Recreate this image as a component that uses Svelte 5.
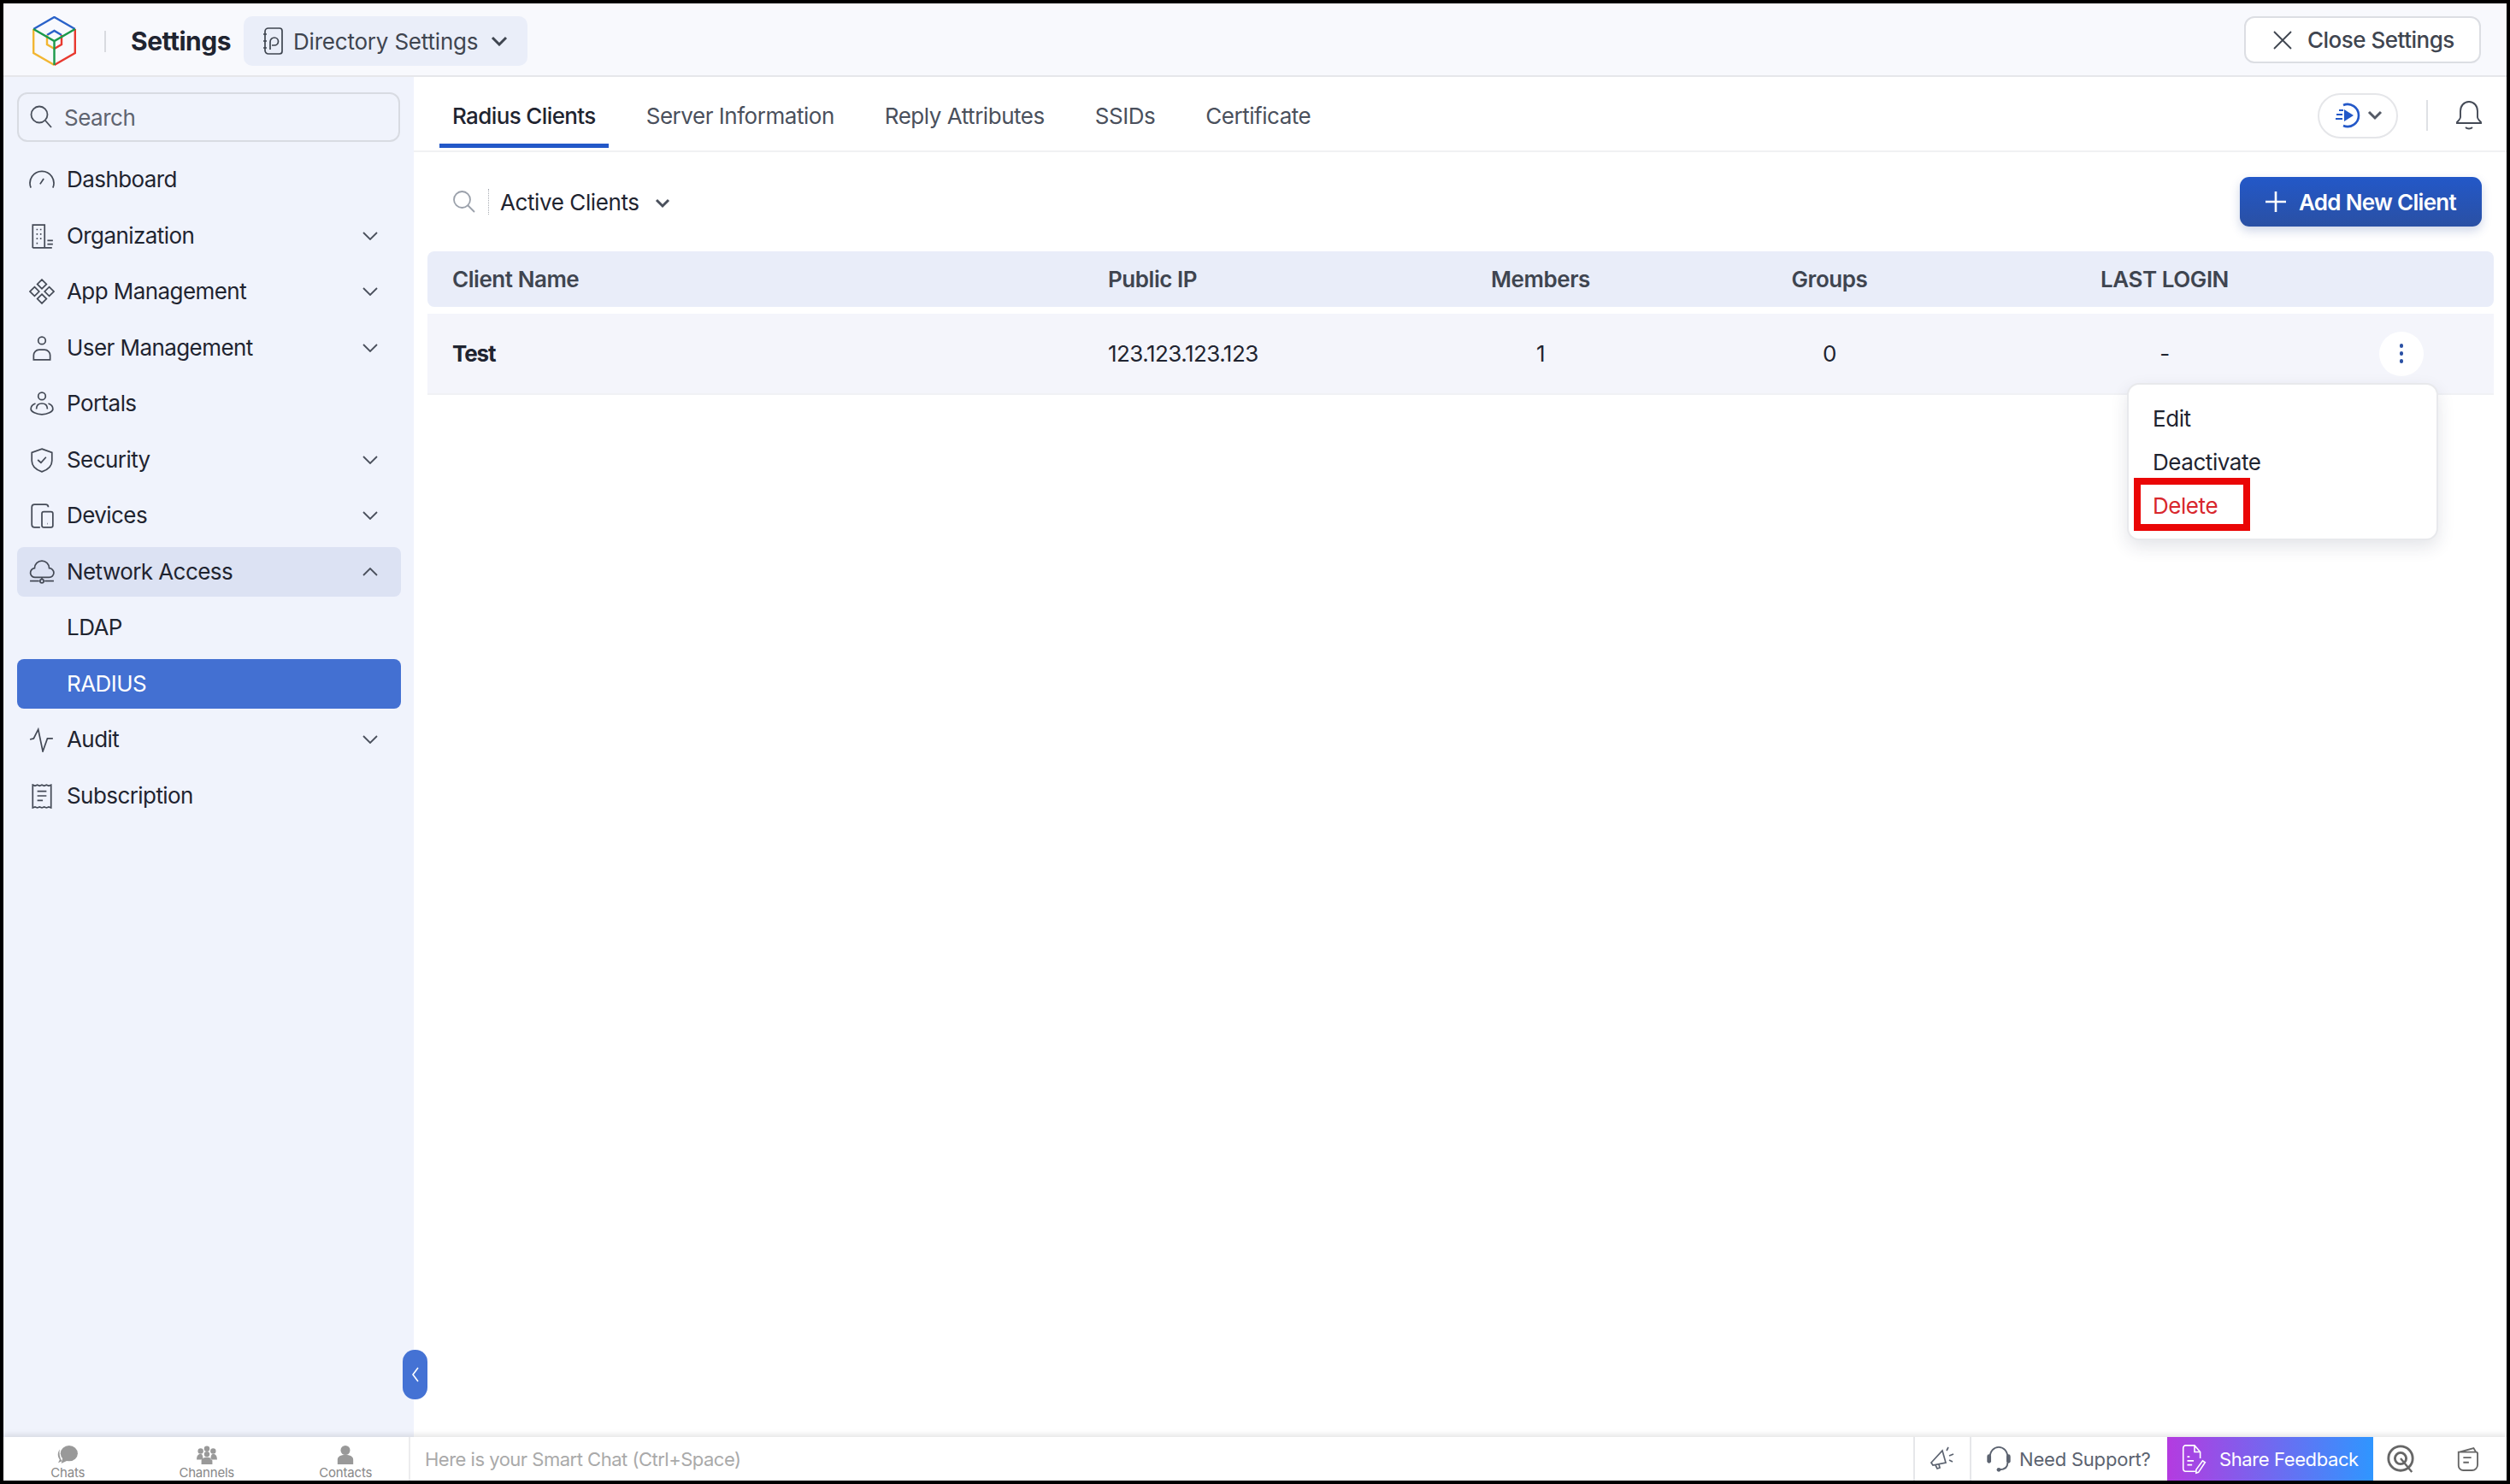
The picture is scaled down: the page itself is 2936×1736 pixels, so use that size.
<script>
  const nav = [
    { label: 'Dashboard', d: 'M2 23A13 13 0 1 1 26 23M12 19l4-6' },
    { label: 'Organization', chev: true, d: 'M4 27V2h13v25H4M17 27h8M20 19h6M20 23h6M8 7h1.5M12 7h1.5M8 12h1.5M12 12h1.5M8 17h1.5M12 17h1.5M8 22h1.5' },
    { label: 'App Management', chev: true, d: 'M14 1l5 5-5 5-5-5zM6 9l5 5-5 5-5-5zM22 9l5 5-5 5-5-5zM14 17l5 5-5 5-5-5z' },
    { label: 'User Management', chev: true, d: 'M18 6a4 4 0 1 1-8 0 4 4 0 0 1 8 0zM5 27v-5a6 6 0 0 1 6-6h6a6 6 0 0 1 6 6v5z' },
    { label: 'Portals', d: 'M18 6a4 4 0 1 1-8 0 4 4 0 0 1 8 0zM8 20c0-4 2-6 6-6s6 2 6 6M7 14c-3 1-5 3-5 6 0 3 6 6 12 6s12-3 12-6c0-3-2-5-5-6' },
    { label: 'Security', chev: true, d: 'M14 2l11 4v9c0 6-5 10-11 12C8 25 3 21 3 15V6zM9.500 14l3.500 3 5.500-6' },
    { label: 'Devices', chev: true, d: 'M21 5a3 3 0 0 0-3-3H6a3 3 0 0 0-3 3v19a3 3 0 0 0 3 3h6M16 10h8a2 2 0 0 1 2 2v13a2 2 0 0 1-2 2h-8a2 2 0 0 1-2-2V12a2 2 0 0 1 2-2zM20 23h.5' },
    { label: 'Network Access', open: true, d: 'M7 20a5 5 0 0 1-1-10 8 8 0 0 1 16 0 5 5 0 0 1 0 10zM1 24h10M17 24h10M14 20v2M16 24a2 2 0 1 1-4 0 2 2 0 0 1 4 0z' },
    { label: 'LDAP', sub: true },
    { label: 'RADIUS', sub: true, active: true },
    { label: 'Audit', chev: true, d: 'M1 14l4-1 5-10 5 24 5-14h6' },
    { label: 'Subscription', d: 'M4 2l2.500 1 2.500-1 2.500 1L14 2l2.500 1L19 2l2.500 1L24 2v25l-2.500-1-2.500 1-2.500-1-2.500 1-2.500-1L9 27l-2.500-1L4 27zM9 9h10M9 14h10M9 19h6' }
  ];
  const tabs = ['Radius Clients', 'Server Information', 'Reply Attributes', 'SSIDs', 'Certificate'];
</script>

<div class="page">
  <header class="topbar">
    <svg class="logo" viewBox="0 0 51 58" width="51" height="58" fill="none" stroke-width="2.4">
      <path d="M1.200 15L25.500 1 49.800 15" stroke="#2a62c9"/>
      <path d="M17 22l8.500-5 8.500 5" stroke="#2a62c9"/>
      <path d="M1.200 15v28l24.300 14" stroke="#f2b632"/>
      <path d="M17 22v11l8.500 5" stroke="#f2b632"/>
      <path d="M49.800 15v28L25.500 57" stroke="#e8392f"/>
      <path d="M34 22v11l-8.500 5" stroke="#e8392f"/>
      <path d="M1.200 15l24.300 14L49.800 15M25.500 29v28" stroke="#1a9a4a"/>
    </svg>
    <span class="vline"></span>
    <span class="title">Settings</span>
    <button class="dir">
      <svg viewBox="0 0 24 34" width="24" height="34" fill="none" stroke="#3f4550" stroke-width="1.700">
        <path d="M3 6a4 4 0 0 1 4-4h13a3 3 0 0 1 3 3v24a3 3 0 0 1-3 3H7a4 4 0 0 1-4-4zM1 9h4M1 17h4M1 25h4M9 27v-9a5 5 0 0 1 5-5 4 4 0 0 1 0 9h-3"/>
      </svg>
      <span>Directory Settings</span>
      <svg viewBox="0 0 20 12" width="20" height="12" fill="none" stroke="#3f4550" stroke-width="3"><path d="M2 2l8 8 8-8"/></svg>
    </button>
    <button class="close">
      <svg viewBox="0 0 22 22" width="22" height="22" fill="none" stroke="#3f4550" stroke-width="1.800"><path d="M1 1l20 20M21 1L1 21"/></svg>
      <span>Close Settings</span>
    </button>
  </header>

  <div class="middle">
    <aside class="sidebar">
      <div class="search">
        <svg viewBox="0 0 26 28" width="26" height="28" fill="none" stroke="#4a505c" stroke-width="1.800"><circle cx="11" cy="11" r="9.500"/><path d="M18 18l7 8"/></svg>
        <span>Search</span>
      </div>
      <nav>
        {#each nav as item}
          <div class="row" class:open={item.open} class:active={item.active}>
            {#if item.d}
              <svg class="ico" viewBox="0 0 28 28" width="30" height="30" fill="none" stroke="#444a56" stroke-width="1.600"><path d={item.d}/></svg>
            {:else}
              <span class="ico-space"></span>
            {/if}
            <span class="lbl">{item.label}</span>
            {#if item.chev}
              <svg class="chev" viewBox="0 0 18 10" width="18" height="10" fill="none" stroke="#4a505c" stroke-width="1.800"><path d="M1 1l8 8 8-8"/></svg>
            {:else if item.open}
              <svg class="chev" viewBox="0 0 18 10" width="18" height="10" fill="none" stroke="#4a505c" stroke-width="1.800"><path d="M1 9l8-8 8 8"/></svg>
            {/if}
          </div>
        {/each}
      </nav>
      <button class="collapse" aria-label="Collapse">
        <svg viewBox="0 0 10 20" width="10" height="20" fill="none" stroke="#fff" stroke-width="1.600"><path d="M8 2l-6 8 6 8"/></svg>
      </button>
    </aside>

    <main class="content">
      <div class="tabs">
        {#each tabs as t, i}
          <div class="tab" class:current={i === 0}>{t}</div>
        {/each}
        <div class="tab-right">
          <div class="play">
            <svg viewBox="0 0 30 30" width="30" height="30" fill="none">
              <path d="M10 3a13 13 0 1 1 0 24" stroke="#2358c8" stroke-width="2.600"/>
              <path d="M11 8l11 7-11 7z" fill="#2358c8"/>
              <path d="M5 9h5M2 14h7M1 19h8" stroke="#2358c8" stroke-width="1.800"/>
            </svg>
            <svg viewBox="0 0 18 12" width="18" height="12" fill="none" stroke="#545a66" stroke-width="3"><path d="M2 2l7 7 7-7"/></svg>
          </div>
          <span class="vline2"></span>
          <svg viewBox="0 0 30 36" width="30" height="36" fill="none" stroke="#444a56" stroke-width="1.900">
            <path d="M15 2c-6 0-10 5-10 11v7c0 2-2 4-4 6v1h28v-1c-2-2-4-4-4-6v-7c0-6-4-11-10-11zM11 32c2 2 6 2 8 0"/>
          </svg>
        </div>
      </div>

      <div class="toolbar">
        <svg viewBox="0 0 26 26" width="26" height="26" fill="none" stroke="#9aa0aa" stroke-width="1.800"><circle cx="10.500" cy="10.500" r="9.500"/><path d="M17 17l8 8"/></svg>
        <span class="dots"></span>
        <span class="filter">Active Clients</span>
        <svg class="fchev" viewBox="0 0 18 12" width="18" height="12" fill="none" stroke="#4a505c" stroke-width="3"><path d="M2 2l7 7 7-7"/></svg>
        <button class="add">
          <svg viewBox="0 0 24 24" width="24" height="24" fill="none" stroke="#fff" stroke-width="2.600"><path d="M12 0v24M0 12h24"/></svg>
          <span>Add New Client</span>
        </button>
      </div>

      <div class="table">
        <div class="thead grid">
          <div class="name">Client Name</div>
          <div>Public IP</div>
          <div class="c">Members</div>
          <div class="c">Groups</div>
          <div class="c">LAST LOGIN</div>
        </div>
        <div class="tr grid">
          <div class="name strong">Test</div>
          <div>123.123.123.123</div>
          <div class="c">1</div>
          <div class="c">0</div>
          <div class="c">-</div>
          <div class="act">
            <span class="kebab"><i></i><i></i><i></i></span>
          </div>
        </div>
        <div class="menu">
          <div class="mi">Edit</div>
          <div class="mi">Deactivate</div>
          <div class="mi red">Delete</div>
          <span class="mark"></span>
        </div>
      </div>
    </main>
  </div>

  <footer class="bottom">
    <div class="chat-tabs">
      <div class="ct">
        <svg viewBox="0 0 26 24" width="26" height="22" fill="#999"><ellipse cx="15" cy="10" rx="11" ry="10"/><path d="M7 15l-2 8 8-4z"/><path d="M3 5C0 9 0 14 3 18l-2 4 5-2C3 16 2 10 3 5z"/></svg>
        <span>Chats</span>
      </div>
      <div class="ct">
        <svg viewBox="0 0 26 24" width="26" height="22" fill="#999"><circle cx="5" cy="7" r="3.500"/><circle cx="21" cy="7" r="3.500"/><circle cx="13" cy="4" r="3.500"/><circle cx="13" cy="11" r="3.500"/><path d="M0 18c0-5 2-7 5-7 2 0 3 1 3 7zM26 18c0-5-2-7-5-7-2 0-3 1-3 7zM6 24v-4c0-3 3-5 7-5s7 2 7 5v4z"/></svg>
        <span>Channels</span>
      </div>
      <div class="ct">
        <svg viewBox="0 0 26 24" width="26" height="22" fill="#999"><circle cx="13" cy="6" r="6"/><path d="M3 24v-6c0-4 4-6 10-6s10 2 10 6v6z"/></svg>
        <span>Contacts</span>
      </div>
    </div>
    <div class="smart">Here is your Smart Chat (Ctrl+Space)</div>
    <div class="b-cell mega">
      <svg viewBox="0 0 30 30" width="30" height="30" fill="none" stroke="#5c6370" stroke-width="1.700">
        <path d="M2 19L15 5l4 14-15 3zM7 22l2 4 3-1-1-4M20 5l2-4M23 11l5-2M23 16l4 2"/>
      </svg>
    </div>
    <div class="support">
      <svg viewBox="0 0 30 36" width="30" height="34" fill="none" stroke="#5c6370" stroke-width="2">
        <path d="M4 16C4 8 9 3 15 3s11 5 11 13M26 22c0 6-4 9-10 9"/>
        <rect x="0.500" y="12" width="5" height="11" rx="2.500" fill="#5c6370" stroke="none"/>
        <rect x="24.500" y="12" width="5" height="11" rx="2.500" fill="#5c6370" stroke="none"/>
        <circle cx="15" cy="31" r="2.500" fill="#5c6370" stroke="none"/>
      </svg>
      <span>Need Support?</span>
    </div>
    <div class="feedback">
      <svg viewBox="0 0 30 38" width="30" height="36" fill="none" stroke="#fff" stroke-width="1.700">
        <path d="M16 34H4a3 3 0 0 1-3-3V5a3 3 0 0 1 3-3h11l7 8v8M15 2v8h7M6 16h3M6 21h8M6 26h6M20 35l-3 1 0-4 8-11 3 2z"/>
      </svg>
      <span>Share Feedback</span>
    </div>
    <div class="tail">
      <svg viewBox="0 0 34 36" width="34" height="34" fill="none" stroke="#666" stroke-width="3">
        <circle cx="17" cy="17" r="15"/><circle cx="17" cy="17" r="7"/><path d="M17 17l14 17" stroke-width="2.500"/>
      </svg>
      <svg viewBox="0 0 28 34" width="26" height="32" fill="none" stroke="#666" stroke-width="2">
        <path d="M4 8l18-5 3 5M3 8h22a2 2 0 0 1 2 2v14a7 7 0 0 1-7 7H9a6 6 0 0 1-6-6zM9 15h10M9 21h7"/>
      </svg>
    </div>
  </footer>
</div>

<style>
  :global(body) { margin: 0; background: #fff; }
  :global(*) { box-sizing: border-box; }
  .page {
    width: 2936px; height: 1736px; border: 4px solid #000;
    display: flex; flex-direction: column;
    font-family: Inter, "Liberation Sans", sans-serif; color: #1f2430;
    overflow: hidden; background: #fff;
  }
  button { font: inherit; border: 0; background: none; padding: 0; }

  .topbar {
    height: 86px; flex: none; background: #f8f9fd; border-bottom: 2px solid #e6e7ea;
    display: flex; align-items: center; padding: 4px 30px 0 34px;
  }
  .vline { width: 2px; height: 25px; background: #d9dbe0; margin-left: 33px; }
  .title { font-size: 30px; font-weight: 700; margin-left: 29px; letter-spacing: -0.500px; }
  .dir {
    margin-left: 15px; height: 58px; width: 332px; background: #eaeef9; border-radius: 10px;
    display: flex; align-items: center; padding-left: 22px; color: #3f4550; font-size: 26px; letter-spacing: -0.200px;
  }
  .dir span { margin: 0 15px 0 12px; }
  .close {
    margin-left: auto; margin-bottom: 3px; width: 277px; height: 55px; border: 2px solid #dcdee3; border-radius: 12px; background: #fff;
    display: flex; align-items: center; padding-left: 32px; gap: 18px;
    color: #3f4550; font-size: 26px; font-weight: 500; letter-spacing: -0.500px;
  }

  .middle { flex: 1; display: flex; min-height: 0; }
  .sidebar { width: 480px; flex: none; background: #f0f3fc; padding: 18px 15px 0 16px; position: relative; }
  .search {
    height: 58px; width: 448px; border: 2px solid #d8dbe2; border-radius: 12px;
    display: flex; align-items: center; padding-left: 13px; gap: 14px;
    color: #5f6470; font-size: 26px; letter-spacing: -0.500px;
  }
  nav { margin-top: 15px; display: flex; flex-direction: column; gap: 7.500px; }
  .row {
    height: 58px; border-radius: 8px; display: flex; align-items: center;
    padding: 0 27px 0 14px; font-size: 26px; color: #1f2430; letter-spacing: -0.570px;
  }
  .row.open { background: #dce2f3; }
  .row.active { background: #4370d2; color: #fff; }
  .ico { flex: none; }
  .ico-space { width: 30px; flex: none; }
  .lbl { margin-left: 14px; padding-bottom: 1px; }
  .chev { margin-left: auto; }
  .collapse {
    position: absolute; right: -16px; bottom: 44px; width: 29px; height: 58px;
    background: #4472d4; border-radius: 14px; display: flex; align-items: center; justify-content: center;
  }

  .content { flex: 1; min-width: 0; display: flex; flex-direction: column; }
  .tabs {
    height: 88px; flex: none; display: flex; align-items: flex-start; padding: 0 29px 0 30px; gap: 29px;
    border-bottom: 2px solid #f0f1f3;
  }
  .tab {
    height: 83px; padding: 12px 15px 0; display: flex; align-items: center;
    font-size: 26px; color: #4a505c; border-bottom: 5px solid transparent; letter-spacing: -0.470px;
  }
  .tab.current { color: #1f2430; font-weight: 500; border-bottom-color: #2358c8; letter-spacing: -0.620px; }
  .tab-right { margin-left: auto; display: flex; align-items: center; height: 86px; padding-top: 4px; }
  .play {
    width: 94px; height: 53px; border: 2px solid #e5e6e9; border-radius: 27px;
    display: flex; align-items: center; padding-left: 18px; gap: 8px;
  }
  .vline2 { width: 2px; height: 36px; background: #dfe1e5; margin: 0 33px; }

  .toolbar {
    height: 116px; flex: none; display: flex; align-items: center; padding: 0 29px 0 46px;
  }
  .dots { height: 30px; border-left: 1px dotted #a8acb3; margin-left: 15px; }
  .filter { font-size: 26px; margin-left: 13px; color: #1f2430; letter-spacing: -0.400px; }
  .fchev { margin-left: 18px; margin-top: 4px; }
  .add {
    margin-left: auto; width: 283px; height: 58px; border-radius: 11px;
    background: linear-gradient(#2358c8, #2a50a4); box-shadow: 0 5px 12px rgba(35, 70, 150, .22);
    color: #fff; font-size: 26px; font-weight: 600; letter-spacing: -0.700px;
    display: flex; align-items: center; padding-left: 30px; gap: 15px;
  }

  .table { margin: 0 15px 0 16px; position: relative; }
  .grid { display: grid; grid-template-columns: 796px 344px 324px 352px 432px 1fr; align-items: center; }
  .thead { height: 65px; background: #e9edf9; border-radius: 8px; font-size: 26px; font-weight: 600; color: #3f4550; letter-spacing: -0.450px; }
  .tr { margin-top: 8px; height: 95px; background: #f4f5fb; border-bottom: 2px solid #f0f1f5; font-size: 26px; letter-spacing: -0.550px; }
  .name { padding-left: 29px; }
  .strong { font-weight: 700; letter-spacing: -1.100px; }
  .c { text-align: center; }
  .act { padding-left: 35px; }
  .kebab {
    width: 52px; height: 52px; border-radius: 50%; background: #fff;
    display: flex; flex-direction: column; align-items: center; justify-content: center; gap: 4.500px;
  }
  .kebab i { width: 4.500px; height: 4.500px; border-radius: 50%; background: #2a50a4; display: block; }

  .menu {
    position: absolute; left: 1988px; top: 154px; width: 364px; height: 184px;
    background: #fff; border: 2px solid #e8e9ec; border-radius: 14px;
    box-shadow: 0 8px 20px rgba(30, 40, 70, .12); padding: 14px 0 0 28px; letter-spacing: -0.450px;
  }
  .mi { height: 51px; display: flex; align-items: center; font-size: 26px; color: #1f2430; }
  .mi.red { color: #d8272d; }
  .mark {
    position: absolute; left: 6px; top: 109px; width: 136px; height: 62px; border: 8px solid #ea0606;
  }

  .bottom {
    height: 51px; flex: none; display: flex; position: relative; background: #fff;
    box-shadow: 0 -3px 6px rgba(0, 0, 0, .1);
  }
  .chat-tabs { width: 476px; flex: none; display: flex; border-right: 2px solid #ececee; overflow: hidden; }
  .ct { width: 162.500px; flex: none; margin-left: -6px; margin-right: 6px; display: flex; flex-direction: column; align-items: center; padding-top: 10px; color: #888; font-size: 15px; line-height: 15px; letter-spacing: -0.200px; }
  .ct span { margin-top: 2px; }
  .smart { flex: 1; padding-left: 17px; font-size: 22px; color: #aaa; display: flex; align-items: center; letter-spacing: -0.500px; }
  .b-cell { height: 51px; }
  .mega {
    width: 68px; border-left: 2px solid #e6e7ea; border-right: 2px solid #e6e7ea;
    display: flex; align-items: center; justify-content: center;
  }
  .support { width: 229px; display: flex; align-items: center; padding-left: 17px; gap: 9px; font-size: 22px; color: #5c6370; letter-spacing: -0.200px; }
  .feedback {
    width: 241px; display: flex; align-items: center; padding-left: 17px; gap: 14px;
    background: linear-gradient(90deg, #b43be0, #2f96ff); color: #fff; font-size: 22px; letter-spacing: -0.400px;
  }
  .tail { width: 156px; display: flex; align-items: center; padding-left: 15px; gap: 48px; }
</style>
